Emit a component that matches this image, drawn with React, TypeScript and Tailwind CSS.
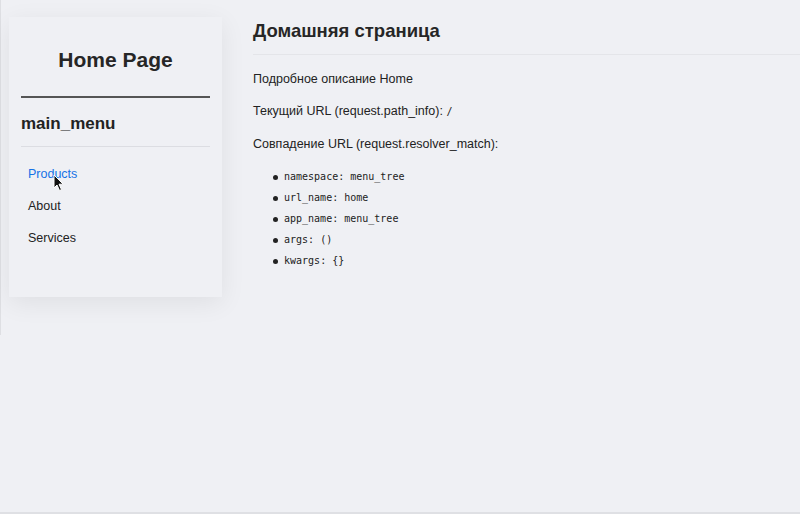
import React from 'react';

const menuItems = [
  { label: 'Products', active: true },
  { label: 'About', active: false },
  { label: 'Services', active: false },
];

const matchInfo = [
  { key: 'namespace', value: 'menu_tree' },
  { key: 'url_name', value: 'home' },
  { key: 'app_name', value: 'menu_tree' },
  { key: 'args', value: '()' },
  { key: 'kwargs', value: '{}' },
];

const Cursor = () => (
  <svg
    width="12"
    height="18"
    viewBox="0 0 12 18"
    className="absolute left-[44px] top-[157px] pointer-events-none"
  >
    <path
      d="M1 1 L1 14 L4 11 L6.5 16.5 L8.5 15.6 L6 10.2 L10.2 10.2 Z"
      fill="#111"
      stroke="#fff"
      strokeWidth="1"
      strokeLinejoin="round"
    />
  </svg>
);

const Sidebar: React.FC = () => (
  <aside className="shrink-0 pl-[9px] pt-[17px]">
    <div className="relative w-[213px] h-[280px] bg-[#eff0f4] px-3 shadow-[0_6px_24px_rgba(0,0,0,0.07)]">
      <h2 className="pt-[31px] pb-[24px] text-center text-[21px] leading-[24px] font-bold text-[#262626] border-b-2 border-[#555]">
        Home Page
      </h2>
      <h3 className="pt-[16px] pb-[12px] text-[17px] leading-[20px] font-bold text-[#222] border-b border-[#dcdde2]">
        main_menu
      </h3>
      <ul className="pt-[19px] pl-[7px] flex flex-col gap-[16px]">
        {menuItems.map((item) => (
          <li key={item.label} className="text-[12.5px] leading-[16px]">
            <a
              href="#"
              className={item.active ? 'text-[#1672e6]' : 'text-[#222]'}
            >
              {item.label}
            </a>
          </li>
        ))}
      </ul>
      <Cursor />
    </div>
  </aside>
);

const App: React.FC = () => {
  return (
    <div
      className="relative flex min-h-[514px] bg-[#eff0f4] text-[#222] border-b-2 border-[#dfe0e4]"
      style={{ fontFamily: '"Liberation Sans", Arial, sans-serif' }}
    >
      <div className="absolute left-0 top-0 h-[335px] w-px bg-[#dedfe3]" />
      <Sidebar />
      <main className="flex-1 pl-[31px] pt-[19px]">
        <h1 className="pb-[11px] text-[18.5px] leading-[24px] font-bold text-[#262626] border-b border-[#e4e5e9]">
          Домашняя страница
        </h1>
        <div className="pt-[16px] flex flex-col gap-[16px] text-[12.5px] leading-[16px]">
          <p>Подробное описание Home</p>
          <p>
            Текущий URL (request.path_info):{' '}
            <code className="text-[10px]" style={{ fontFamily: '"DejaVu Sans Mono", monospace' }}>
              /
            </code>
          </p>
          <p>Совпадение URL (request.resolver_match):</p>
        </div>
        <ul
          className="mt-[18px] pl-[20px] flex flex-col gap-[7px] text-[10px] leading-[14px]"
          style={{ fontFamily: '"DejaVu Sans Mono", monospace' }}
        >
          {matchInfo.map((item) => (
            <li key={item.key} className="flex items-center gap-[6px]">
              <span className="w-[5px] h-[5px] rounded-full bg-[#222]" />
              <span>
                {item.key}: {item.value}
              </span>
            </li>
          ))}
        </ul>
      </main>
    </div>
  );
};

export default App;
